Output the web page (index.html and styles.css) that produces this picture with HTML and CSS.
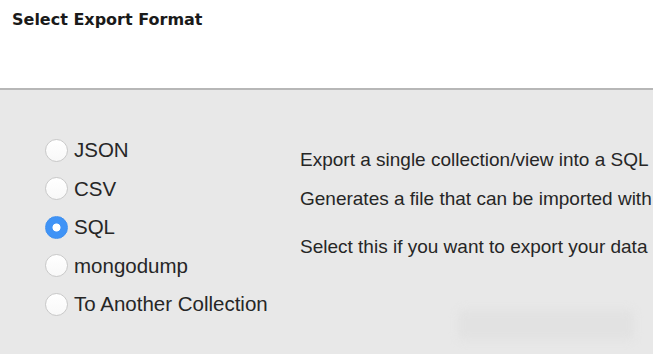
FILE: index.html
```html
<!DOCTYPE html>
<html lang="en">
<head>
    <meta charset="UTF-8">
    <meta name="viewport" content="width=device-width, initial-scale=1.0">
    <title>Select Export Format</title>
    <link rel="stylesheet" href="styles.css">
</head>
<body>
    <div class="header">
        <h1>Select Export Format</h1>
    </div>

    <div class="panel">
        <!-- format options -->
        <ul class="formats">
            <li><span class="radio"></span>JSON</li>
            <li><span class="radio"></span>CSV</li>
            <li><span class="radio checked"></span>SQL</li>
            <li><span class="radio"></span>mongodump</li>
            <li><span class="radio"></span>To Another Collection</li>
        </ul>

        <!-- description of the selected format -->
        <div class="description">
            <p>Export a single collection/view into a SQL</p>
            <p>Generates a file that can be imported with</p>
            <p class="last">Select this if you want to export your data</p>
        </div>

        <div class="button-ghost"></div>
    </div>
</body>
</html>
```

FILE: styles.css
```css
html, body {
    margin: 0;
    padding: 0;
    height: 100%;
    overflow: hidden;
}
body {
    font-family: "Liberation Sans", Arial, sans-serif;
    color: #222;
    background-color: #e8e8e8;
}
.header {
    background-color: #fff;
    border-bottom: 2px solid #b7b7b7;
    box-sizing: border-box;
    height: 90px;
}
h1 {
    margin: 0;
    padding: 10px 0 0 12px;
    font-family: "DejaVu Sans", Verdana, sans-serif;
    font-size: 16px;
    font-weight: bold;
    color: #1a1a1a;
}
.panel {
    position: relative;
    display: flex;
    height: 264px;
    white-space: nowrap;
    overflow: hidden;
}
.formats {
    list-style: none;
    margin: 0;
    padding: 41px 0 0 45px;
    width: 255px;
    flex-shrink: 0;
}
.formats li {
    display: flex;
    align-items: center;
    height: 38.5px;
    font-size: 20.5px;
    color: #262626;
}
.radio {
    width: 21px;
    height: 21px;
    border-radius: 50%;
    border: 1px solid #c9c9c9;
    background: linear-gradient(#fff, #f8f8f8);
    margin-right: 6px;
    flex-shrink: 0;
}
.radio.checked {
    border: 1px solid #3d8ff0;
    background: radial-gradient(circle, #fff 0, #fff 3.6px, #3f93f6 4.4px);
}
.description {
    padding-top: 59px;
    font-size: 19px;
    color: #262626;
}
.description p {
    margin: 0 0 17px;
    line-height: 22px;
}
.description p.last {
    margin-top: 26px;
}
.button-ghost {
    position: absolute;
    left: 458px;
    top: 220px;
    width: 176px;
    height: 30px;
    border-radius: 5px;
    background-color: #e2e2e2;
    filter: blur(4px);
}
```
